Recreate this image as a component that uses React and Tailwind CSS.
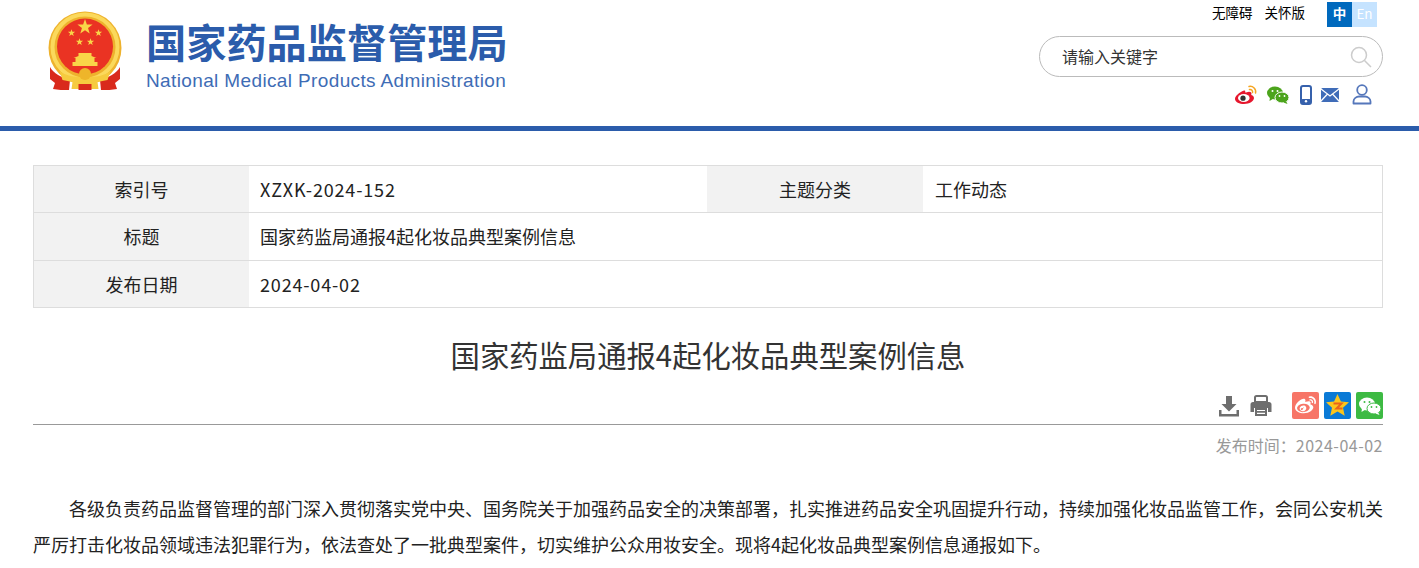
import React from 'react';
import { FaWeibo } from 'react-icons/fa';

const cjk = '"Noto Sans CJK SC", sans-serif';

const starPoints = (cx, cy, r) => {
    const pts = [];
    for (let i = 0; i < 10; i++) {
        const rad = i % 2 === 0 ? r : r * 0.4;
        const a = -Math.PI / 2 + (i * Math.PI) / 5;
        pts.push(`${cx + rad * Math.cos(a)},${cy + rad * Math.sin(a)}`);
    }
    return pts.join(' ');
};

const Emblem = () => (
    <svg width="76" height="80" viewBox="0 0 76 80">
        <path d="M3 56c3 6 12 11 20 13l-1 10c-6 0-11 0-16-1l2-6-5-4z" fill="#d92a1c" />
        <path d="M73 56c-3 6-12 11-20 13l1 10c6 0 11 0 16-1l-2-6 5-4z" fill="#d92a1c" />
        <circle cx="38" cy="37" r="36.500" fill="#eeb22d" />
        <circle cx="38" cy="36" r="32.500" fill="none" stroke="#fbd95c" strokeWidth="4" />
        <circle cx="38" cy="35.500" r="28" fill="#ea3323" />
        <polygon points={starPoints(38, 16, 8)} fill="#f9d548" />
        <polygon points={starPoints(24.500, 22, 3.800)} fill="#f9d548" />
        <polygon points={starPoints(51.500, 22, 3.800)} fill="#f9d548" />
        <polygon points={starPoints(32.500, 31, 3.800)} fill="#f9d548" />
        <polygon points={starPoints(43.500, 31, 3.800)} fill="#f9d548" />
        <path d="M31.500 45l-5 2h23l-5-2v-3h-13zM28.500 47h19v4h-19zM25.500 51h25v4h-25z" fill="#f9d548" />
        <path d="M12.500 60c6 5 15 6 25.500 6s19.500-1 25.500-6l-3 9-10 2 1 7h-10L38 74l-3.500 4h-10l1-7-10-2z" fill="#f6cb3f" />
        <circle cx="38" cy="63" r="6" fill="#eeb52a" />
        <path d="M31.500 73h13v6h-13z" fill="#d92a1c" />
    </svg>
);

const WeiboColor = () => (
    <svg width="24" height="20" viewBox="0 0 24 20">
        <path d="M10 5.500C5 7.500 1 11 1 14c0 3 4.500 5 9 5 5.500 0 10-3 10-6 0-2-2-2.800-2.800-3 .8-1.800.3-3.300-2.200-3.300-1.500 0-3 .8-3.500.8-.7 0 .5-2.500-1.500-2z" fill="#e6162d" />
        <ellipse cx="9.800" cy="13" rx="5.800" ry="4" fill="#fff" />
        <circle cx="9" cy="13.200" r="2.600" fill="#333" />
        <path d="M15 1.500c4-.8 7.500 2.500 6.500 6.500M15.500 4.500c2-.4 3.500 1.200 3 3" fill="none" stroke="#f5a623" strokeWidth="1.500" strokeLinecap="round" />
    </svg>
);

const Wechat = ({ big = '#4ca41c', small = '#4ca41c', gap = '#fff' }) => (
    <svg width="22" height="18" viewBox="0 0 22 18">
        <ellipse cx="8" cy="7" rx="8" ry="6.500" fill={big} />
        <path d="M3 11l-.5 4 4-2.500z" fill={big} />
        <ellipse cx="15" cy="11.500" rx="7" ry="5.500" fill={small} stroke={gap} strokeWidth="1" />
        <path d="M19 15l1.500 3-4-1.500z" fill={small} />
        <circle cx="5.500" cy="5" r="1" fill={gap} />
        <circle cx="10.500" cy="5" r="1" fill={gap} />
        <circle cx="12.500" cy="10" r=".9" fill={gap} />
        <circle cx="17.500" cy="10" r=".9" fill={gap} />
    </svg>
);

const Phone = () => (
    <svg width="12" height="20" viewBox="0 0 12 20">
        <rect x="1" y="1" width="10" height="18" rx="2" fill="none" stroke="#3661ac" strokeWidth="2" />
        <rect x="1" y="14" width="10" height="5" rx="1.500" fill="#3661ac" />
        <circle cx="6" cy="16.300" r="1.200" fill="#fff" />
    </svg>
);

const Mail = () => (
    <svg width="18" height="14" viewBox="0 0 18 14">
        <rect width="18" height="14" rx="1.500" fill="#3f6cb8" />
        <path d="M0 1l9 7 9-7M0 13l6.500-7M18 13l-6.500-7" fill="none" stroke="#fff" strokeWidth="1.300" />
    </svg>
);

const User = () => (
    <svg width="20" height="21" viewBox="0 0 20 21">
        <circle cx="10" cy="6" r="4.800" fill="none" stroke="#5577bb" strokeWidth="1.800" />
        <path d="M1.500 19.500v-2c0-3 3-5 5.500-5h6c2.500 0 5.500 2 5.500 5v2z" fill="none" stroke="#5577bb" strokeWidth="1.800" strokeLinejoin="round" />
    </svg>
);

const Download = () => (
    <svg width="22" height="22" viewBox="0 0 22 22" fill="#6e6e6e">
        <path d="M8 1h6v8h4.500L11 16.500 3.500 9H8z" />
        <path d="M1 15h2.500v4h15v-4H21v6.500H1z" />
    </svg>
);

const Printer = () => (
    <svg width="22" height="22" viewBox="0 0 22 22">
        <path d="M5 7V2.500C5 1.500 5.500 1 6.500 1h9c1 0 1.500.5 1.500 1.500V7z" fill="none" stroke="#6e6e6e" strokeWidth="2" />
        <path d="M3 7h16c1.500 0 2.500 1 2.500 2.500V17H18v-4H4v4H.5V9.500C.5 8 1.500 7 3 7z" fill="#6e6e6e" />
        <path d="M5 13h12v8H5z" fill="#6e6e6e" />
        <path d="M7 15.500h8M7 18.300h8" stroke="#fff" strokeWidth="1.200" />
    </svg>
);

const Qzone = () => (
    <svg width="27" height="27" viewBox="0 0 27 27">
        <rect width="27" height="27" rx="2" fill="#0a7ad6" />
        <path d="M13.500 2l3.400 7.400 8.100.9-6 5.400 1.700 8-7.200-4.100-7.200 4.100 1.700-8-6-5.400 8.100-.9z" fill="#fbc51c" />
        <path d="M9.500 11.500h8l-5 5h6" fill="none" stroke="#e8641b" strokeWidth="2" />
    </svg>
);

const rows = [
    { h: 'h-[46px]', cells: [['索引号', 'XZXK-2024-152', true], ['主题分类', '工作动态']] },
    { h: 'h-[47px]', cells: [['标题', '国家药监局通报4起化妆品典型案例信息']] },
    { h: 'h-[46px]', cells: [['发布日期', '2024-04-02', true]] },
];

export default function App() {
    return (
        <div className="bg-white text-[#333]" style={{ fontFamily: cjk }}>
            <header className="h-[131px] border-b-[5px] border-[#2b5cab] flex justify-between pl-[47px] pr-9">
                <div className="flex pt-[11px]">
                    <Emblem />
                    <div className="ml-[23px] pt-[2px] w-[360px]">
                        <div className="text-[40.200px] leading-[56px] font-bold text-[#2b5cab] whitespace-nowrap">国家药品监督管理局</div>
                        <div className="text-[19px] leading-[24px] tracking-[0.370px] text-[#3e6cb5] whitespace-nowrap" style={{ fontFamily: '"Liberation Sans", sans-serif' }}>National Medical Products Administration</div>
                    </div>
                </div>
                <div className="w-[344px] pt-[2px]">
                    <div className="flex justify-end items-start pr-[6px] h-[25px] text-[13.500px] text-black">
                        <span className="mr-[12px]">无障碍</span>
                        <span className="mr-[22px]">关怀版</span>
                        <span className="w-[25px] h-[25px] bg-[#0069bd] text-white text-center leading-[22px] font-bold">中</span>
                        <span className="w-[25px] h-[25px] bg-[#c5e3ff] text-white text-center leading-[22px]">En</span>
                    </div>
                    <div className="mt-[9px] h-[41px] border border-[#bbb] rounded-full flex items-center justify-between pl-[22px] pr-[10px] text-[16px]">
                        <span className="mb-[2px]">请输入关键字</span>
                        <svg width="22" height="22" viewBox="0 0 22 22" fill="none" stroke="#ccc" strokeWidth="1.500">
                            <circle cx="9" cy="9" r="7.500" />
                            <path d="M14.500 14.500l6.500 6.500" />
                        </svg>
                    </div>
                    <div className="mt-[7px] flex items-center justify-end pr-[11px] gap-[9px]">
                        <WeiboColor />
                        <Wechat />
                        <span className="ml-[2px]"><Phone /></span>
                        <Mail />
                        <span className="ml-[4px]"><User /></span>
                    </div>
                </div>
            </header>

            <main className="pl-[33px] pr-9 pt-[34px]">
                <div className="border border-[#ddd] text-[18px] text-[#222]">
                    {rows.map((row, i) => (
                        <div key={i} className={`flex ${row.h} box-content ${i > 0 ? 'border-t border-[#ddd]' : ''}`}>
                            {row.cells.map(([label, value, wide], j) => (
                                <React.Fragment key={label}>
                                    <div className={`${j === 0 ? 'w-[215px]' : 'w-[216px]'} shrink-0 bg-[#f2f2f2] flex items-center justify-center`}>{label}</div>
                                    <div className={`${row.cells.length > 1 && j === 0 ? 'w-[458px]' : 'flex-1'} ${j === 0 ? 'pl-[11px]' : 'pl-[12px]'} flex items-center ${wide ? 'tracking-[0.830px]' : ''}`}>{value}</div>
                                </React.Fragment>
                            ))}
                        </div>
                    ))}
                </div>

                <h1 className="mt-[24px] text-center text-[29.330px] leading-[44px] font-normal">国家药监局通报4起化妆品典型案例信息</h1>

                <div className="mt-[16px] h-[33px] border-b border-[#999] flex justify-end items-start gap-[5px]">
                    <span className="mt-[3px]"><Download /></span>
                    <span className="mr-[15px] mt-[3px] ml-[5px]"><Printer /></span>
                    <span className="w-[27px] h-[27px] rounded-[2px] bg-[#f77567] flex items-center justify-center text-white text-[21px]"><FaWeibo /></span>
                    <Qzone />
                    <span className="w-[27px] h-[27px] rounded-[2px] bg-[#3dba43] flex items-center justify-center"><Wechat big="#fff" small="#fff" gap="#3dba43" /></span>
                </div>

                <div className="mt-[6px] text-right text-[16px] leading-[28px] text-[#999]">发布时间：<span className="tracking-[0.500px]">2024-04-02</span></div>

                <p className="mt-[31px] text-[18px] leading-[36px] text-justify indent-[36px] text-[#222]">各级负责药品监督管理的部门深入贯彻落实党中央、国务院关于加强药品安全的决策部署，扎实推进药品安全巩固提升行动，持续加强化妆品监管工作，会同公安机关严厉打击化妆品领域违法犯罪行为，依法查处了一批典型案件，切实维护公众用妆安全。现将4起化妆品典型案例信息通报如下。</p>
            </main>
        </div>
    );
}
